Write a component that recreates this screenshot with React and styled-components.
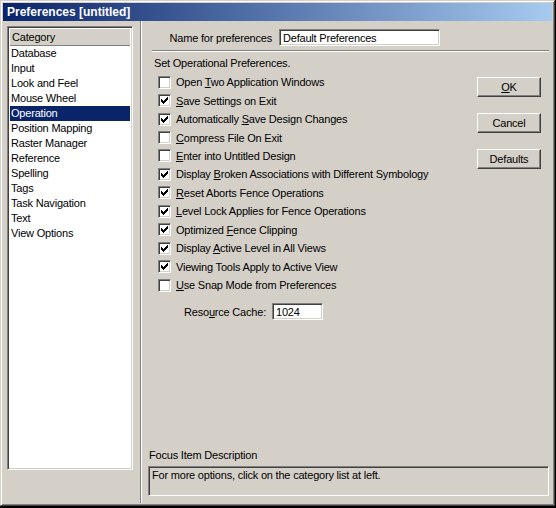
import React, { useState } from 'react';
import styled, { createGlobalStyle } from 'styled-components';

const GlobalStyle = createGlobalStyle`
  html, body {
    margin: 0;
    padding: 0;
    background: #000;
  }
  body {
    font-family: "Liberation Sans", Arial, sans-serif;
    font-size: 11px;
    letter-spacing: -0.2px;
    color: #000;
  }
`;

const Window = styled.div`
  width: 555px;
  height: 506px;
  box-sizing: border-box;
  background: #d4d0c8;
  border: 1px solid;
  border-color: #d4d0c8 #404040 #404040 #d4d0c8;
  box-shadow: inset 1px 1px 0 #fff, inset -1px -1px 0 #808080;
  padding: 2px;
  display: flex;
  flex-direction: column;
`;

const TitleBar = styled.div`
  height: 18px;
  flex: none;
  display: flex;
  align-items: center;
  padding-left: 4px;
  background: linear-gradient(to right, #0a246a, #a6caf0);
  color: #fff;
  font-weight: bold;
  font-size: 12px;
  letter-spacing: 0;
`;

const Body = styled.div`
  flex: 1;
  display: flex;
  min-height: 0;
`;

const LeftColumn = styled.div`
  padding: 5px 0 0 4px;
`;

const ListBox = styled.div`
  width: 126px;
  height: 444px;
  box-sizing: border-box;
  border: 1px solid;
  border-color: #808080 #fff #fff #808080;
  box-shadow: inset 1px 1px 0 #404040, inset -1px -1px 0 #d4d0c8;
  padding: 2px;
  background: #fff;
  display: flex;
  flex-direction: column;
`;

const ListHeader = styled.div`
  height: 16px;
  line-height: 16px;
  padding-left: 2px;
  background: #d4d0c8;
  border-bottom: 1px solid #808080;
`;

const ListItem = styled.div`
  height: 15px;
  line-height: 15px;
  padding-left: 1px;
  cursor: default;
  background: ${(p) => (p.$selected ? '#0a246a' : 'transparent')};
  color: ${(p) => (p.$selected ? '#fff' : '#000')};
`;

const VSep = styled.div`
  width: 0;
  margin-left: 7px;
  border-left: 1px solid #808080;
  border-right: 1px solid #fff;
`;

const Panel = styled.div`
  flex: 1;
  display: flex;
  flex-direction: column;
  min-width: 0;
`;

const NameRow = styled.div`
  display: flex;
  align-items: center;
  margin-top: 8px;
  height: 17px;
`;

const NameLabel = styled.label`
  width: 130px;
  text-align: right;
  margin-right: 7px;
`;

const TextField = styled.input`
  box-sizing: border-box;
  width: ${(p) => p.$width}px;
  height: 17px;
  padding: 0 3px;
  margin: 0;
  font-family: inherit;
  font-size: 11px;
  letter-spacing: inherit;
  background: #fff;
  border: 1px solid;
  border-color: #808080 #fff #fff #808080;
  box-shadow: inset 1px 1px 0 #404040, inset -1px -1px 0 #d4d0c8;
  outline: none;
`;

const HSep = styled.div`
  margin: 4px 3px 0 10px;
  border-top: 1px solid #808080;
  border-bottom: 1px solid #fff;
`;

const Main = styled.div`
  flex: 1;
  display: flex;
`;

const OptionsColumn = styled.div`
  flex: 1;
  display: flex;
  flex-direction: column;
`;

const Heading = styled.div`
  margin: 5px 0 3px 12px;
  height: 13px;
  line-height: 13px;
`;

const OptionRow = styled.label`
  height: 18.45px;
  display: flex;
  align-items: center;
  padding-left: 16px;
  gap: 5px;
  cursor: default;
`;

const Box = styled.span`
  width: 13px;
  height: 13px;
  box-sizing: border-box;
  flex: none;
  background: #fff;
  border: 1px solid;
  border-color: #808080 #fff #fff #808080;
  box-shadow: inset 1px 1px 0 #404040, inset -1px -1px 0 #d4d0c8;
  display: flex;
  align-items: center;
  justify-content: center;
`;

const Key = styled.span`
  text-decoration: underline;
`;

const CacheRow = styled.div`
  display: flex;
  align-items: center;
  margin: 9px 0 0 42px;
  gap: 6px;
`;

const ButtonColumn = styled.div`
  display: flex;
  flex-direction: column;
  gap: 16px;
  padding: 25px 11px 0 0;
`;

const Button = styled.button`
  width: 64px;
  height: 20px;
  box-sizing: border-box;
  margin: 0;
  padding: 0;
  font-family: inherit;
  font-size: 11px;
  letter-spacing: inherit;
  color: #000;
  background: #d4d0c8;
  border: 1px solid;
  border-color: #fff #404040 #404040 #fff;
  box-shadow: inset -1px -1px 0 #808080;
  cursor: default;
`;

const FocusLabel = styled.div`
  margin: 0 0 4px 7px;
  height: 13px;
  line-height: 13px;
`;

const FocusBox = styled.div`
  height: 30px;
  box-sizing: border-box;
  margin: 0 3px 7px 6px;
  padding: 2px 3px;
  border: 1px solid;
  border-color: #808080 #fff #fff #808080;
  box-shadow: inset 1px 1px 0 #404040, inset -1px -1px 0 #d4d0c8;
`;

const categories = [
  'Database',
  'Input',
  'Look and Feel',
  'Mouse Wheel',
  'Operation',
  'Position Mapping',
  'Raster Manager',
  'Reference',
  'Spelling',
  'Tags',
  'Task Navigation',
  'Text',
  'View Options',
];

// [before, key, after, checked]
const options = [
  ['Open ', 'T', 'wo Application Windows', false],
  ['', 'S', 'ave Settings on Exit', true],
  ['Automatically ', 'S', 'ave Design Changes', true],
  ['', 'C', 'ompress File On Exit', false],
  ['', 'E', 'nter into Untitled Design', false],
  ['Display ', 'B', 'roken Associations with Different Symbology', true],
  ['', 'R', 'eset Aborts Fence Operations', true],
  ['', 'L', 'evel Lock Applies for Fence Operations', true],
  ['Optimized ', 'F', 'ence Clipping', true],
  ['Display ', 'A', 'ctive Level in All Views', true],
  ['Viewing Tools Apply to Active View', '', '', true],
  ['', 'U', 'se Snap Mode from Preferences', false],
];

const Check = () => (
  <svg width="7" height="7" viewBox="0 0 7 7" shapeRendering="crispEdges">
    <path
      d="M0 2h1v3h-1z M1 3h1v3h-1z M2 4h1v3h-1z M3 3h1v3h-1z M4 2h1v3h-1z M5 1h1v3h-1z M6 0h1v3h-1z"
      fill="#000"
    />
  </svg>
);

const App = () => {
  const [selected, setSelected] = useState('Operation');
  const [checks, setChecks] = useState(options.map((o) => o[3]));

  const toggle = (i) => setChecks(checks.map((c, j) => (j === i ? !c : c)));

  return (
    <>
      <GlobalStyle />
      <Window>
        <TitleBar>Preferences [untitled]</TitleBar>
        <Body>
          <LeftColumn>
            <ListBox>
              <ListHeader>Category</ListHeader>
              {categories.map((c) => (
                <ListItem key={c} $selected={c === selected} onClick={() => setSelected(c)}>
                  {c}
                </ListItem>
              ))}
            </ListBox>
          </LeftColumn>
          <VSep />
          <Panel>
            <NameRow>
              <NameLabel>Name for preferences</NameLabel>
              <TextField $width={161} defaultValue="Default Preferences" />
            </NameRow>
            <HSep />
            <Main>
              <OptionsColumn>
                <Heading>Set Operational Preferences.</Heading>
                {options.map(([before, key, after], i) => (
                  <OptionRow key={i} onClick={() => toggle(i)}>
                    <Box>{checks[i] && <Check />}</Box>
                    <span>
                      {before}
                      {key && <Key>{key}</Key>}
                      {after}
                    </span>
                  </OptionRow>
                ))}
                <CacheRow>
                  <span>
                    Reso<Key>u</Key>rce Cache:
                  </span>
                  <TextField $width={51} defaultValue="1024" />
                </CacheRow>
              </OptionsColumn>
              <ButtonColumn>
                <Button>
                  <Key>O</Key>K
                </Button>
                <Button>Cancel</Button>
                <Button>Defaults</Button>
              </ButtonColumn>
            </Main>
            <FocusLabel>Focus Item Description</FocusLabel>
            <FocusBox>For more options, click on the category list at left.</FocusBox>
          </Panel>
        </Body>
      </Window>
    </>
  );
};

export default App;
